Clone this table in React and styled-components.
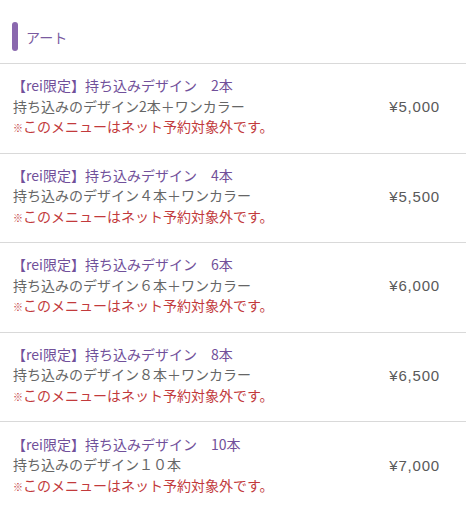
import { createGlobalStyle, styled } from "styled-components";

const GlobalStyle = createGlobalStyle`
	body {
		margin: 0;
		background: #fff;
		font-family: "Noto Sans CJK JP", "Noto Sans", sans-serif;
	}
`;

const menus = [
	{ id: 1, title: "【rei限定】持ち込みデザイン　2本", desc: "持ち込みのデザイン2本＋ワンカラー", price: "¥5,000" },
	{ id: 2, title: "【rei限定】持ち込みデザイン　4本", desc: "持ち込みのデザイン４本＋ワンカラー", price: "¥5,500" },
	{ id: 3, title: "【rei限定】持ち込みデザイン　6本", desc: "持ち込みのデザイン６本＋ワンカラー", price: "¥6,000" },
	{ id: 4, title: "【rei限定】持ち込みデザイン　8本", desc: "持ち込みのデザイン８本＋ワンカラー", price: "¥6,500" },
	{ id: 5, title: "【rei限定】持ち込みデザイン　10本", desc: "持ち込みのデザイン１０本", price: "¥7,000" },
];

const Page = styled.div`
	width: 466px;
	background: #fff;
`;

const Header = styled.div`
	display: flex;
	align-items: center;
	gap: 8px;
	padding: 10px 0 0 12px;
	border-bottom: 1px solid #d9d9d9;
	box-sizing: border-box;
	height: 64px;
	span {
		font-size: 14px;
		color: #7a5a9f;
	}
`;

const Bar = styled.i`
	display: block;
	width: 6px;
	height: 29px;
	border-radius: 3px;
	background: #8a68ae;
`;

const Row = styled.div`
	display: flex;
	align-items: center;
	justify-content: space-between;
	padding: 12px 26px 15px 12px;
	border-bottom: ${(p) => (p.$last ? "none" : "1px solid #d9d9d9")};
	height: 89.5px;
	box-sizing: border-box;
`;

const Info = styled.div`
	display: flex;
	flex-direction: column;
	font-size: 14px;
	line-height: 20.5px;
	.title {
		color: #71509a;
	}
	.desc {
		color: #666;
		padding-left: 1px;
	}
	.note {
		color: #c23a3c;
		padding-left: 1px;
		b {
			font-weight: normal;
			font-size: 10px;
		}
	}
`;

const Price = styled.span`
	font-family: "Liberation Sans", Arial, sans-serif;
	font-size: 15px;
	letter-spacing: 0.8px;
	color: #595959;
`;

export default function App() {
	return (
		<Page>
			<GlobalStyle />
			<Header>
				<Bar />
				<span>アート</span>
			</Header>
			{menus.map((m, i) => (
				<Row key={m.id} $last={i === menus.length - 1}>
					<Info>
						<span className="title">{m.title}</span>
						<span className="desc">{m.desc}</span>
						<span className="note">
							<b>※</b>このメニューはネット予約対象外です。
						</span>
					</Info>
					<Price>{m.price}</Price>
				</Row>
			))}
		</Page>
	);
}
